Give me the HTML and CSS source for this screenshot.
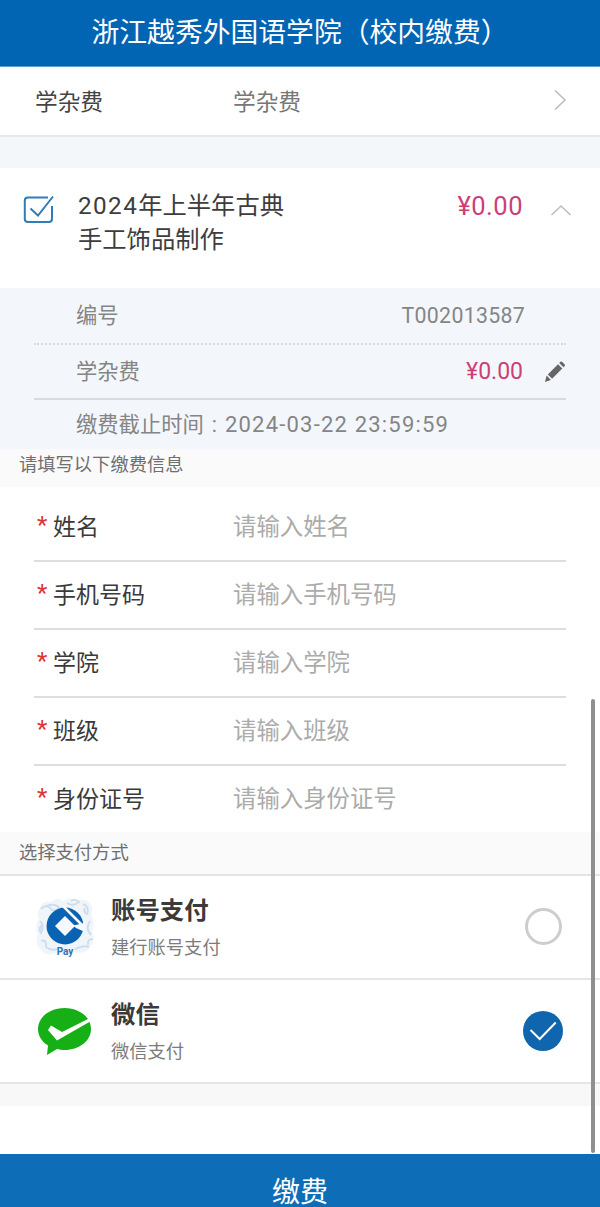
FILE: index.html
```html
<!DOCTYPE html>
<html lang="zh-CN">
<head>
  <meta charset="UTF-8" />
  <meta name="viewport" content="width=device-width, initial-scale=1" />
  <title>校内缴费</title>
  <link rel="stylesheet" href="styles.css">
</head>
<body>
  <div class="page">
    <header class="top-bar">浙江越秀外国语学院（校内缴费）</header>

    <div class="type-row">
      <span class="type-label">学杂费</span>
      <span class="type-value">学杂费</span>
      <svg class="chevron" width="14" height="22" viewBox="0 0 14 22"><path d="M2 1.5 L12 11 L2 20.5" /></svg>
    </div>

    <div class="band"></div>

    <div class="item">
      <svg class="item-check" width="32" height="32" viewBox="0 0 32 32">
        <path class="box" d="M25 4.500 H5 Q1.800 4.500 1.800 7.500 V26 Q1.800 29 5 29 H26 Q29 29 29 26 V13" />
        <path class="tick" d="M7.500 15.500 L15 22.500 L30 3.500" />
      </svg>
      <div class="item-title"><span class="num">2024</span>年上半年古典<br>手工饰品制作</div>
      <div class="item-price">¥0.00</div>
      <svg class="chevron up" width="22" height="12" viewBox="0 0 22 12"><path d="M1.500 11 L11 2 L20.500 11" /></svg>
    </div>

    <div class="detail">
      <div class="detail-row dotted">
        <span>编号</span>
        <span class="detail-num">T002013587</span>
      </div>
      <div class="detail-row solid">
        <span>学杂费</span>
        <span class="detail-price">¥0.00</span>
        <svg class="pencil" width="22" height="22" viewBox="0 0 22 22">
          <path d="M1 21 L2.600 14.600 L6.900 18.900 Z M3.800 13.400 L14 3.200 L18.300 7.500 L8.100 17.700 Z M15.200 2 L16.400 0.800 Q17.200 0 18 0.800 L20.700 3.500 Q21.500 4.300 20.700 5.100 L19.500 6.300 Z" />
        </svg>
      </div>
      <div class="detail-row deadline">缴费截止时间<span class="colon">:</span><span class="date">2024-03-22 23:59:59</span></div>
    </div>

    <div class="section-title first">请填写以下缴费信息</div>

    <div class="form">
      <div class="field"><span class="star">*</span><span class="field-label">姓名</span><span class="field-input">请输入姓名</span></div>
      <div class="field"><span class="star">*</span><span class="field-label">手机号码</span><span class="field-input">请输入手机号码</span></div>
      <div class="field"><span class="star">*</span><span class="field-label">学院</span><span class="field-input">请输入学院</span></div>
      <div class="field"><span class="star">*</span><span class="field-label">班级</span><span class="field-input">请输入班级</span></div>
      <div class="field"><span class="star">*</span><span class="field-label">身份证号</span><span class="field-input">请输入身份证号</span></div>
    </div>

    <div class="section-title second">选择支付方式</div>

    <div class="pay-row">
      <svg class="pay-icon" width="64" height="64" viewBox="0 0 64 64">
        <path class="clouds" d="M7 13 Q10 4 18 7 Q24 1 30 6 Q38 1 44 6 Q52 2 57 9 Q61 14 58 20 Q63 28 59 36 Q63 46 57 52 Q52 60 42 57 Q32 62 22 58 Q12 62 7 54 Q1 48 5 40 Q1 30 6 24 Q3 17 7 13 Z" />
        <path class="cloud-lines" d="M8 14 Q14 8 18 14 Q22 18 26 12 Q20 8 14 11 M34 8 Q40 12 46 7 Q42 3 38 6 M50 9 Q57 12 54 19 Q50 17 52 13 M7 26 Q12 30 8 38 Q5 34 9 30 M57 26 Q52 34 58 40 M60 44 Q54 44 55 50 M8 46 Q14 44 13 52 Q18 56 24 54 M42 54 Q50 50 56 52" />
        <circle class="ccb" cx="32" cy="31" r="18.500" />
        <path class="ccb-cut" d="M32 21 L42 31 L32 41 L22 31 Z" />
        <path class="ccb-cut" d="M40 30.500 L52 28 L52 37 L43 33 Z" />
        <path class="ccb-slit" d="M30 11 L49 30" />
        <text class="pay-text" x="32" y="60">Pay</text>
      </svg>
      <div class="pay-info">
        <div class="pay-name">账号支付</div>
        <div class="pay-desc">建行账号支付</div>
      </div>
      <span class="radio"></span>
    </div>

    <div class="pay-row">
      <svg class="pay-icon" width="64" height="64" viewBox="0 0 64 64">
        <path class="wechat" d="M31.500 9 C17 9 5 18 5 30 C5 37 9 43 15 46.500 L14 56 L24 50 C26 50.500 29 51 31.500 51 C46 51 58 42 58 30 C58 18 46 9 31.500 9 Z" />
        <path class="wechat-tick" d="M18 26.500 L29 33 L57 19 L58 22 L24 41.500 L15 31 Z" />
      </svg>
      <div class="pay-info">
        <div class="pay-name">微信</div>
        <div class="pay-desc">微信支付</div>
      </div>
      <svg class="radio-on" width="40" height="40" viewBox="0 0 40 40">
        <circle cx="20" cy="20" r="20" />
        <path d="M7.500 19 L16.700 28 L32.700 11.500" />
      </svg>
    </div>

    <div class="band bottom"></div>
    <div class="spacer"></div>
    <div class="pay-button">缴费</div>

    <div class="scroll-thumb"></div>
  </div>
</body>
</html>
```
FILE: styles.css
```css
* {
  box-sizing: border-box;
}
html, body {
  margin: 0;
  padding: 0;
  background: #fff;
}
body {
  font-family: "Roboto", "Noto Sans CJK SC", sans-serif;
  color: #3a3a3a;
}
.page {
  position: relative;
  width: 600px;
  height: 1207px;
  overflow: hidden;
}

.top-bar {
  height: 67px;
  background: #0265b4;
  border-bottom: 1px solid #5a9fd4;
  color: #fff;
  font-size: 27.8px;
  line-height: 66px;
  text-align: center;
}

.type-row {
  height: 70px;
  display: flex;
  align-items: center;
  padding: 0 33px 2px 35px;
  border-bottom: 2px solid #e6e7e9;
  font-size: 22.7px;
}
.type-label {
  width: 198px;
  color: #444;
}
.type-value {
  flex: 1;
  color: #777;
}
.chevron path {
  fill: none;
  stroke: #bdbdbd;
  stroke-width: 1.6;
}

.band {
  height: 31px;
  background: #f4f7fa;
}
.band.bottom {
  height: 22px;
  background: #f8f8f8;
}
.spacer {
  height: 48px;
}

.item {
  height: 120px;
  display: flex;
  align-items: flex-start;
  padding: 21px 28px 0 23px;
}
.item-check {
  margin: 4px 0 0 0;
  flex: none;
}
.item-check .box {
  fill: none;
  stroke: #2f7db8;
  stroke-width: 2;
}
.item-check .tick {
  fill: none;
  stroke: #2f7db8;
  stroke-width: 2;
}
.item-title {
  flex: 1;
  margin-left: 23px;
  font-size: 24.3px;
  line-height: 34px;
  color: #3d3d3d;
}
.num {
  letter-spacing: 1.4px;
}
.item-price {
  margin: 0 27px 0 0;
  font-size: 25.5px;
  letter-spacing: 0.5px;
  line-height: 34px;
  color: #cc3f75;
}
.chevron.up {
  margin-top: 15px;
}

.detail {
  height: 161px;
  padding: 0 34px;
  background: #f3f7fb;
  font-size: 21.3px;
  line-height: 30px;
  color: #858585;
}
.detail-row {
  display: flex;
  align-items: center;
  padding-left: 42px;
}
.detail-row.dotted {
  height: 57px;
  padding-right: 41px;
  justify-content: space-between;
  border-bottom: 2px dotted #d8dbde;
}
.detail-row.solid {
  height: 55px;
  border-bottom: 2px solid #d9dcdf;
}
.detail-row.deadline {
  height: 49px;
}
.detail-num {
  letter-spacing: 0.3px;
}
.colon {
  margin: 0 8px 0 8px;
}
.date {
  font-size: 22px;
  letter-spacing: 1.2px;
}
.detail-price {
  margin-left: auto;
  font-size: 23px;
  color: #cc3f75;
}
.pencil {
  margin-left: 21px;
  fill: #666;
}

.section-title {
  padding-left: 19px;
  background: #fafafa;
  font-size: 18.3px;
  color: #6f6f6f;
}
.section-title.first {
  height: 38px;
  line-height: 32px;
}
.section-title.second {
  height: 44px;
  line-height: 42px;
  border-bottom: 2px solid #e5e5e5;
}

.form {
  padding: 7px 34px 0;
}
.field {
  height: 68px;
  display: flex;
  align-items: center;
  padding-bottom: 4px;
  border-bottom: 2px solid #dcdedf;
  font-size: 23px;
}
.field:last-child {
  height: 66px;
  padding-bottom: 5px;
  border-bottom: none;
}
.star {
  width: 19px;
  padding-left: 3px;
  font-size: 24px;
  color: #dd3333;
}
.field-label {
  width: 180px;
  color: #3a3a3a;
}
.field-input {
  font-size: 23.4px;
  color: #ababab;
}

.pay-row {
  height: 104px;
  display: flex;
  align-items: center;
  padding: 0 37px 0 33px;
  border-bottom: 2px solid #e5e5e5;
}
.pay-icon {
  flex: none;
  margin-right: 14px;
}
.clouds {
  fill: #f0f5fa;
}
.cloud-lines {
  fill: none;
  stroke: #cfdeee;
  stroke-width: 2;
}
.ccb {
  fill: #0a62b3;
}
.ccb-cut {
  fill: #f6f9fc;
}
.ccb-slit {
  fill: none;
  stroke: #f6f9fc;
  stroke-width: 2.5;
}
.pay-text {
  font-family: "Roboto", sans-serif;
  font-size: 10px;
  font-weight: 700;
  text-anchor: middle;
  fill: #2f72b8;
}
.wechat {
  fill: #16b016;
}
.wechat-tick {
  fill: #fff;
}
.pay-info {
  flex: 1;
  padding-top: 2px;
}
.pay-name {
  font-size: 24.4px;
  font-weight: 700;
  line-height: 34px;
  color: #3a3a3a;
}
.pay-desc {
  margin-top: 5px;
  font-size: 18.3px;
  line-height: 30px;
  color: #7c7c7c;
}
.radio {
  width: 37px;
  height: 37px;
  margin: 0 1px 1px 0;
  border: 3px solid #cdcdcd;
  border-radius: 50%;
}
.radio-on circle {
  fill: #0f66ae;
}
.radio-on path {
  fill: none;
  stroke: #fff;
  stroke-width: 2;
}

.pay-button {
  height: 53px;
  padding-top: 20px;
  background: #0e6db7;
  color: #fff;
  font-size: 28px;
  line-height: 38px;
  text-align: center;
}

.scroll-thumb {
  position: absolute;
  left: 591px;
  top: 699px;
  width: 4px;
  height: 454px;
  border-radius: 2px;
  background: #8f8f8f;
}
```
